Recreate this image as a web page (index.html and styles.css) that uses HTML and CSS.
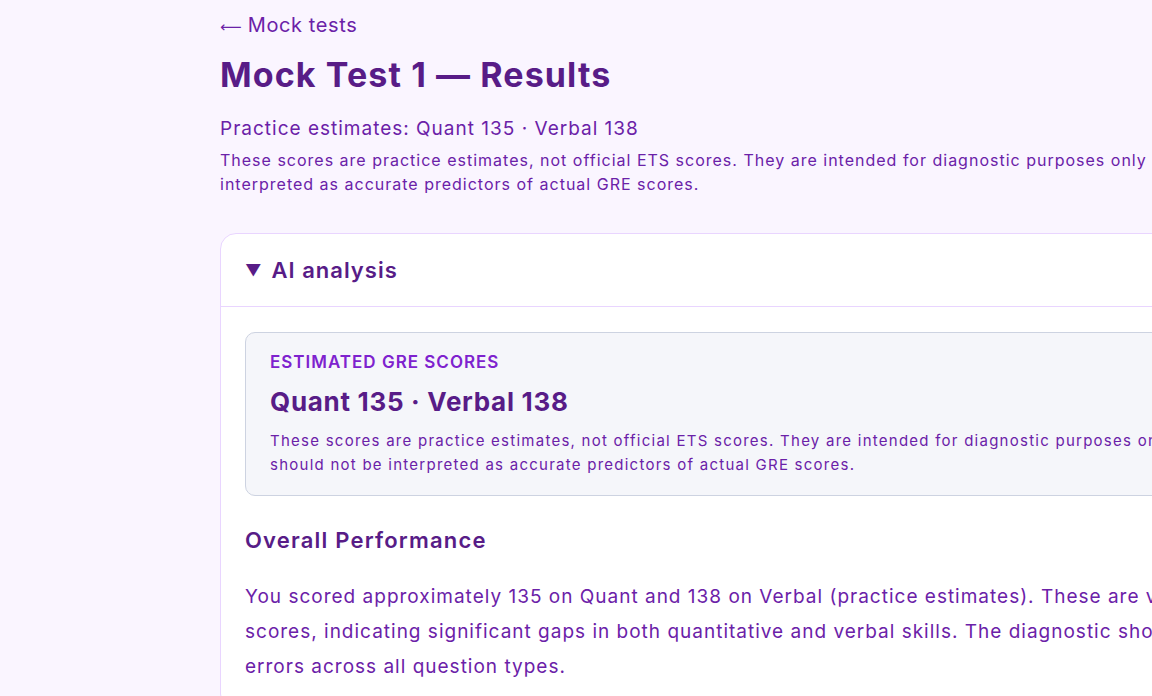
FILE: index.html
```html
<!DOCTYPE html>
<html lang="en">
<head>
<meta charset="utf-8">
<title>Mock Test 1 — Results</title>
<link rel="stylesheet" href="styles.css">
</head>
<body>
<div class="page">
	<a class="back" href="#"><span class="back-arrow">⟵</span> Mock tests</a>
	<h1 class="title">Mock Test 1 — Results</h1>
	<p class="estimate">Practice estimates: Quant 135 · Verbal 138</p>
	<p class="note">These scores are practice estimates, not official ETS scores. They are intended for diagnostic purposes only and should not be interpreted as accurate predictors of actual GRE scores.</p>

	<div class="card">
		<div class="card-head">
			<span class="caret">▼</span>
			<span>AI analysis</span>
		</div>
		<div class="card-body">
			<div class="scoreBox">
				<div class="scoreBox-label">Estimated GRE scores</div>
				<div class="scoreBox-value">Quant 135 · Verbal 138</div>
				<p class="scoreBox-note">These scores are practice estimates, not official ETS scores. They are intended for diagnostic purposes only and should not be interpreted as accurate predictors of actual GRE scores.</p>
			</div>
			<h2 class="section">Overall Performance</h2>
			<p class="text">You scored approximately 135 on Quant and 138 on Verbal (practice estimates). These are very low scores, indicating significant gaps in both quantitative and verbal skills. The diagnostic shows consistent errors across all question types.</p>
		</div>
	</div>
</div>
</body>
</html>
```

FILE: styles.css
```css
html, body{
	margin:0;
	padding:0;
	overflow:hidden;
}
body{
	background:#faf5ff;
	font-family:Inter, "Noto Sans", sans-serif;
	color:#6b21a8;
	letter-spacing:1px;
}
.page{
	width:1100px;
	margin-left:220px;
	padding-top:11px;
}
.back{
	display:block;
	height:28px;
	font-size:20px;
	line-height:28px;
	color:#6b21a8;
	text-decoration:none;
	letter-spacing:0.6px;
}
.back-arrow{
	font-family:"DejaVu Sans", sans-serif;
	font-size:15px;
	line-height:15px;
	letter-spacing:0;
}
.title{
	margin:14px 0 0;
	font-size:34px;
	line-height:44px;
	font-weight:700;
	color:#581c87;
	letter-spacing:1.1px;
}
.estimate{
	margin:18px 0 0;
	font-size:19px;
	line-height:28px;
}
.note{
	margin:5px 0 0;
	font-size:16px;
	line-height:24px;
}
.card{
	margin-top:37px;
	background:#fff;
	border:1px solid #e9d5ff;
	border-radius:16px;
}
.card-head{
	display:flex;
	align-items:center;
	gap:10px;
	height:72px;
	padding:0 24px;
	border-bottom:1px solid #e9d5ff;
	font-size:22px;
	font-weight:600;
	color:#581c87;
}
.caret{
	font-size:16px;
	letter-spacing:0;
}
.card-body{
	padding:25px 24px;
}
.scoreBox{
	background:#f5f6fa;
	border:1px solid #cdd3e1;
	border-radius:10px;
	padding:18px 24px 18px;
}
.scoreBox-label{
	font-size:17px;
	line-height:22px;
	font-weight:600;
	text-transform:uppercase;
	color:#7e22ce;
}
.scoreBox-value{
	margin-top:11px;
	font-size:26px;
	line-height:36px;
	font-weight:700;
	color:#581c87;
	letter-spacing:0.7px;
}
.scoreBox-note{
	max-width:960px;
	margin:9px 0 0;
	font-size:15px;
	line-height:24px;
	letter-spacing:1.25px;
}
.section{
	margin:27px 0 0;
	font-size:22px;
	line-height:34px;
	font-weight:600;
	color:#581c87;
	letter-spacing:1.2px;
}
.text{
	margin:22px 0 0;
	font-size:19px;
	line-height:35px;
}
```
